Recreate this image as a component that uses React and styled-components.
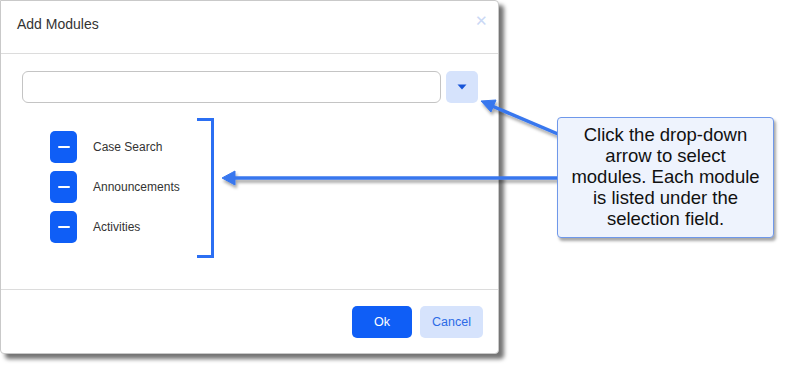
import React from "react"
import styled, { createGlobalStyle } from "styled-components"

const GlobalStyle = createGlobalStyle`
  html, body {
    margin: 0;
    padding: 0;
    background: #ffffff;
    font-family: "Liberation Sans", Arial, sans-serif;
  }
`

const Page = styled.div`
  position: relative;
  width: 789px;
  height: 370px;
  overflow: hidden;
`

const Dialog = styled.section`
  box-sizing: border-box;
  width: 499px;
  height: 354px;
  background: #ffffff;
  border: 1px solid #c9c9c9;
  border-radius: 0 4px 4px 4px;
  box-shadow: 5px 5px 4px rgba(0, 0, 0, 0.55);
  display: flex;
  flex-direction: column;
`

const Header = styled.header`
  height: 52px;
  border-bottom: 1px solid #dcdcdc;
  display: flex;
  align-items: center;
  justify-content: space-between;
  padding: 0 10px 0 16px;
  box-sizing: content-box;
`

const Title = styled.h2`
  margin: 0 0 6px;
  font-size: 14px;
  font-weight: 400;
  color: #333;
`

const Close = styled.span`
  align-self: flex-start;
  margin-top: 12px;
  color: #cad8f5;
  font-size: 15px;
  line-height: 16px;
`

const Body = styled.div`
  flex: 1;
  padding: 17px 20px 0 21px;
  border-bottom: 1px solid #dcdcdc;
`

const SelectRow = styled.div`
  display: flex;
  gap: 5px;
  height: 32px;
`

const Field = styled.div`
  flex: 1;
  box-sizing: border-box;
  border: 1px solid #c4c4c4;
  border-radius: 6px;
`

const Toggle = styled.div`
  width: 32px;
  border-radius: 5px;
  background: #d6e3fc;
  display: flex;
  align-items: center;
  justify-content: center;
`

const List = styled.ul`
  list-style: none;
  margin: 28px 0 0 28px;
  padding: 0;
  display: flex;
  flex-direction: column;
  gap: 8px;
`

const Item = styled.li`
  display: flex;
  align-items: center;
  gap: 16px;
  font-size: 12px;
  color: #333;
`

const Remove = styled.span`
  width: 27px;
  height: 32px;
  border-radius: 5px;
  background: #0f5ef6;
  display: flex;
  align-items: center;
  justify-content: center;

  &:after {
    content: "";
    width: 12px;
    height: 2px;
    background: #ffffff;
    border-radius: 1px;
  }
`

const Footer = styled.footer`
  display: flex;
  justify-content: flex-end;
  gap: 8px;
  padding: 16px 15px 15px 0;
`

const Button = styled.button`
  height: 32px;
  min-width: ${p => (p.$primary ? "60px" : "63px")};
  border: none;
  border-radius: 5px;
  font-family: inherit;
  font-size: 12.5px;
  background: ${p => (p.$primary ? "#0f5ef6" : "#d6e3fc")};
  color: ${p => (p.$primary ? "#ffffff" : "#2d6be6")};
`

const Overlay = styled.svg`
  position: absolute;
  left: 0;
  top: 0;
  pointer-events: none;
`

const Callout = styled.div`
  position: absolute;
  left: 557px;
  top: 117px;
  box-sizing: border-box;
  width: 217px;
  height: 121px;
  background: #eef3fd;
  border: 1px solid #6f98ea;
  border-radius: 4px;
  box-shadow: 2px 3px 3px rgba(0, 0, 0, 0.35);
  display: flex;
  align-items: center;
  justify-content: center;
  text-align: center;
  font-size: 18.5px;
  line-height: 21px;
  color: #111;
  padding-bottom: 2px;
`

const modules = ["Case Search", "Announcements", "Activities"]

export default function App() {
  return (
    <Page>
      <GlobalStyle />
      <Dialog>
        <Header>
          <Title>Add Modules</Title>
          <Close>✕</Close>
        </Header>
        <Body>
          <SelectRow>
            <Field />
            <Toggle>
              <svg width="10" height="6" viewBox="0 0 10 6">
                <path d="M0.5 0.5 H9.5 L5 5.5 Z" fill="#1654d8" />
              </svg>
            </Toggle>
          </SelectRow>
          <List>
            {modules.map(m => (
              <Item key={m}>
                <Remove />
                {m}
              </Item>
            ))}
          </List>
        </Body>
        <Footer>
          <Button $primary>Ok</Button>
          <Button>Cancel</Button>
        </Footer>
      </Dialog>

      <Overlay width="789" height="370" viewBox="0 0 789 370">
        <defs>
          <filter id="sh" x="-20%" y="-50%" width="140%" height="200%">
            <feDropShadow dx="1.5" dy="3" stdDeviation="1.5" floodColor="#000" floodOpacity="0.35" />
          </filter>
        </defs>
        <path d="M197 119.5 H212.5 V256.5 H197" fill="none" stroke="#2b6ff3" strokeWidth="3" />
        <g filter="url(#sh)" fill="#3877ee" stroke="#3877ee">
          <line x1="558" y1="134" x2="492" y2="106" strokeWidth="3.5" />
          <path d="M481 101 L496 100 L491 112 Z" strokeWidth="1" />
          <line x1="558" y1="178" x2="232" y2="178" strokeWidth="3.5" />
          <path d="M222 178 L235 171 L235 185 Z" strokeWidth="1" />
        </g>
      </Overlay>

      <Callout>
        Click the drop-down
        <br />
        arrow to select
        <br />
        modules. Each module
        <br />
        is listed under the
        <br />
        selection field.
      </Callout>
    </Page>
  )
}
